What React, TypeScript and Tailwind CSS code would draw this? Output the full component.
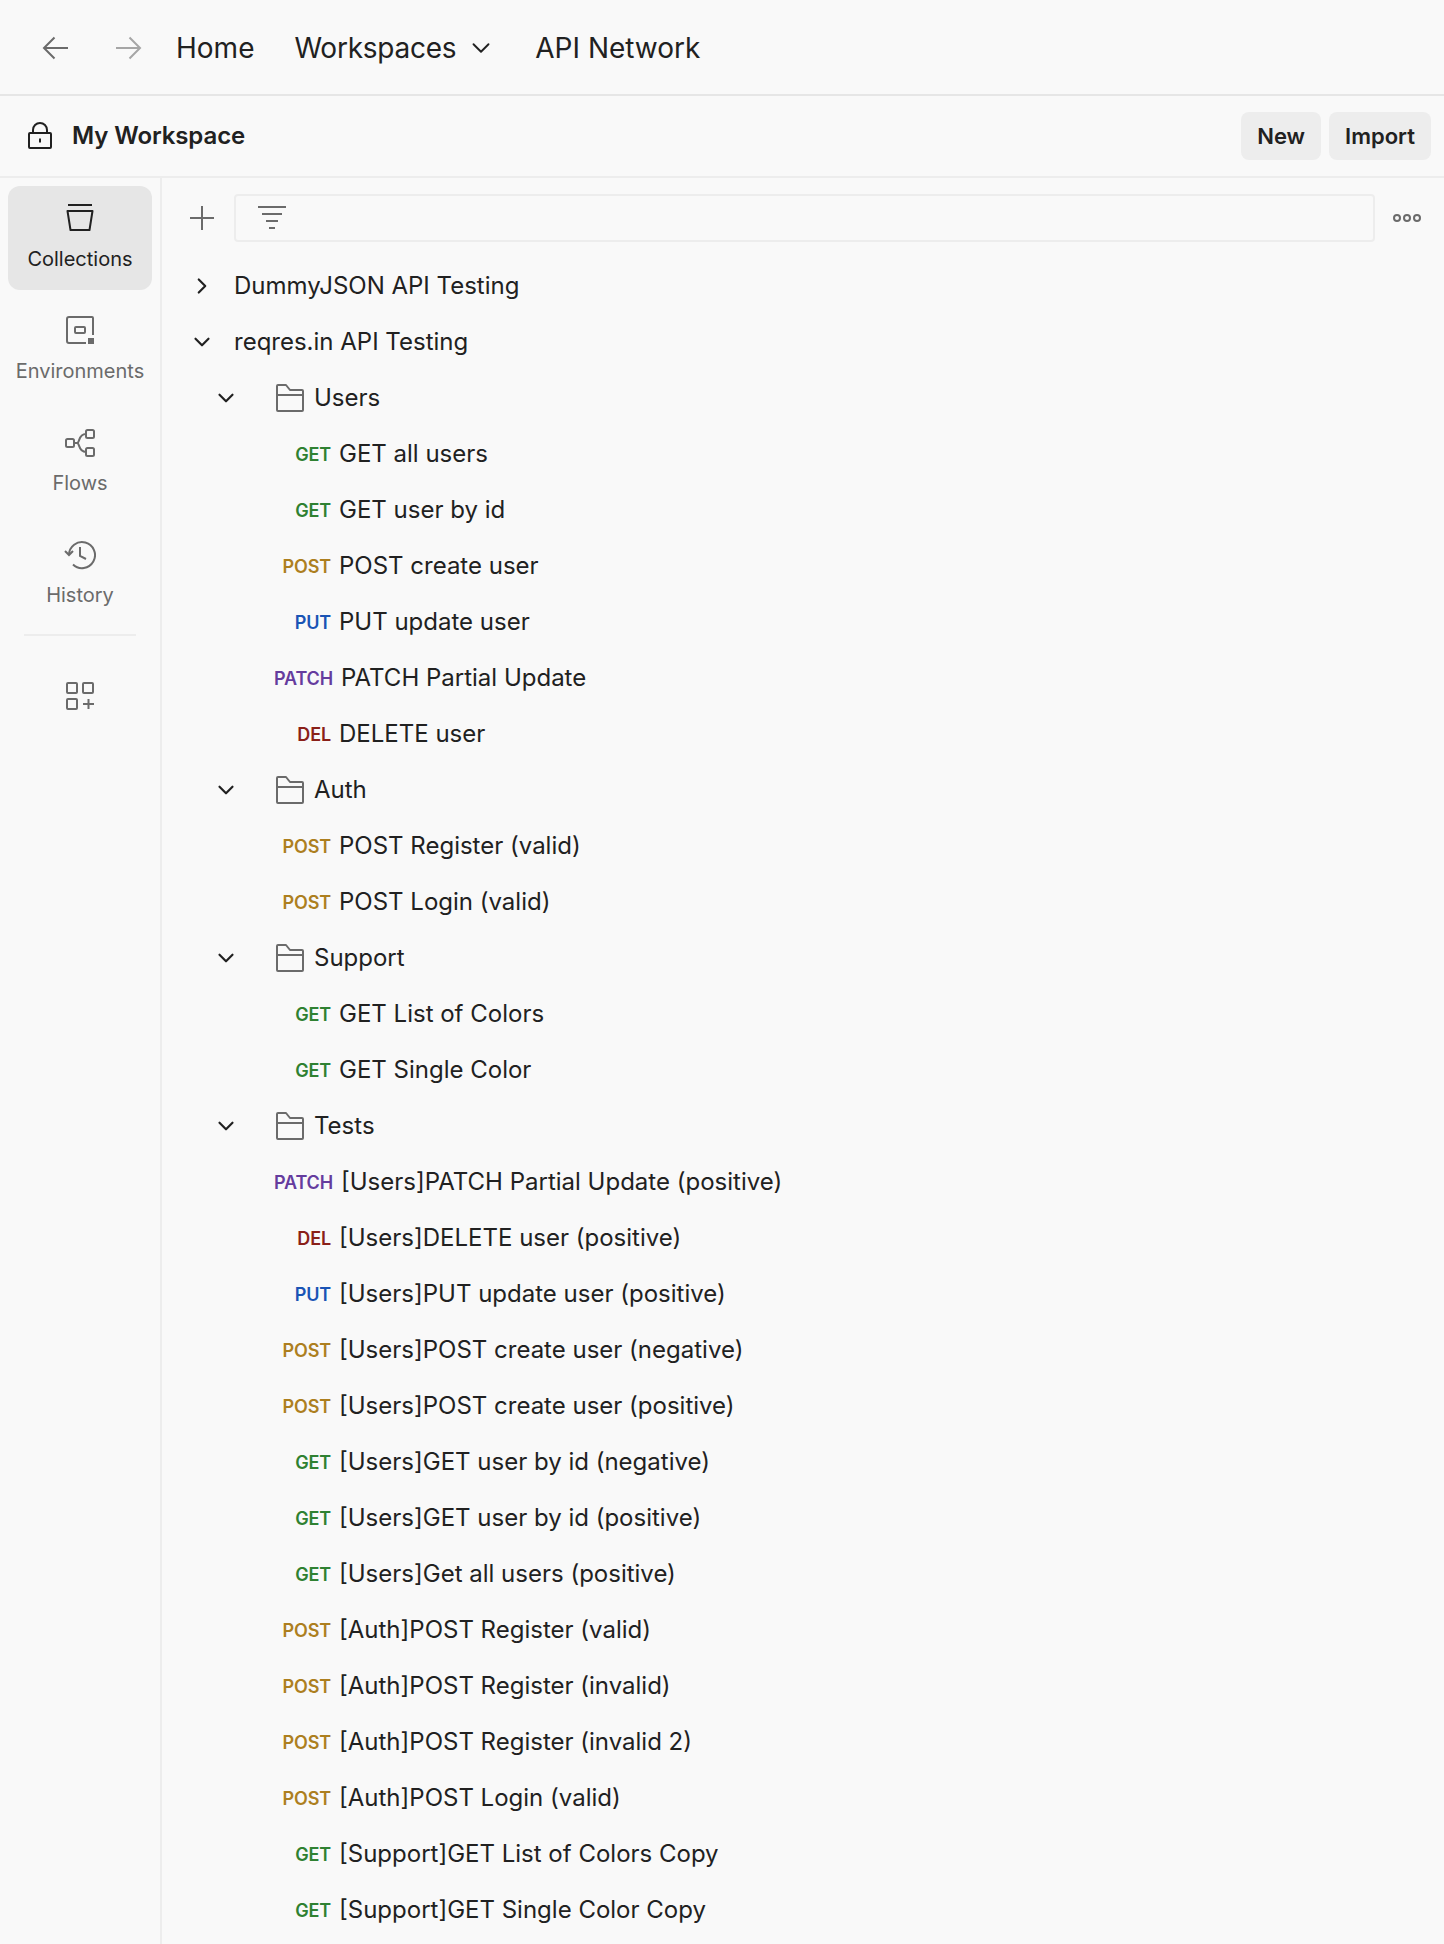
import React from 'react';
import { ChevronDown, ChevronRight } from 'lucide-react';

type Method = 'GET' | 'POST' | 'PUT' | 'PATCH' | 'DEL';

const METHOD_COLORS: Record<Method, string> = {
  GET: 'text-[#2f8132]',
  POST: 'text-[#ad7f1f]',
  PUT: 'text-[#1a54b5]',
  PATCH: 'text-[#653c9e]',
  DEL: 'text-[#8a2018]',
};

type Row =
  | { kind: 'collection'; name: string; open: boolean }
  | { kind: 'folder'; name: string }
  | { kind: 'request'; method: Method; name: string };

const ROWS: Row[] = [
  { kind: 'collection', name: 'DummyJSON API Testing', open: false },
  { kind: 'collection', name: 'reqres.in API Testing', open: true },
  { kind: 'folder', name: 'Users' },
  { kind: 'request', method: 'GET', name: 'GET all users' },
  { kind: 'request', method: 'GET', name: 'GET user by id' },
  { kind: 'request', method: 'POST', name: 'POST create user' },
  { kind: 'request', method: 'PUT', name: 'PUT update user' },
  { kind: 'request', method: 'PATCH', name: 'PATCH Partial Update' },
  { kind: 'request', method: 'DEL', name: 'DELETE user' },
  { kind: 'folder', name: 'Auth' },
  { kind: 'request', method: 'POST', name: 'POST Register (valid)' },
  { kind: 'request', method: 'POST', name: 'POST Login (valid)' },
  { kind: 'folder', name: 'Support' },
  { kind: 'request', method: 'GET', name: 'GET List of Colors' },
  { kind: 'request', method: 'GET', name: 'GET Single Color' },
  { kind: 'folder', name: 'Tests' },
  { kind: 'request', method: 'PATCH', name: '[Users]PATCH Partial Update (positive)' },
  { kind: 'request', method: 'DEL', name: '[Users]DELETE user (positive)' },
  { kind: 'request', method: 'PUT', name: '[Users]PUT update user (positive)' },
  { kind: 'request', method: 'POST', name: '[Users]POST create user (negative)' },
  { kind: 'request', method: 'POST', name: '[Users]POST create user (positive)' },
  { kind: 'request', method: 'GET', name: '[Users]GET user by id (negative)' },
  { kind: 'request', method: 'GET', name: '[Users]GET user by id (positive)' },
  { kind: 'request', method: 'GET', name: '[Users]Get all users (positive)' },
  { kind: 'request', method: 'POST', name: '[Auth]POST Register (valid)' },
  { kind: 'request', method: 'POST', name: '[Auth]POST Register (invalid)' },
  { kind: 'request', method: 'POST', name: '[Auth]POST Register (invalid 2)' },
  { kind: 'request', method: 'POST', name: '[Auth]POST Login (valid)' },
  { kind: 'request', method: 'GET', name: '[Support]GET List of Colors Copy' },
  { kind: 'request', method: 'GET', name: '[Support]GET Single Color Copy' },
];

const BackIcon = ({ color }: { color: string }) => (
  <svg width="32" height="32" viewBox="0 0 32 32" fill="none" stroke={color} strokeWidth="2">
    <path d="M5 16h23M14.500 5.500L4 16l10.500 10.500" />
  </svg>
);

const ForwardIcon = ({ color }: { color: string }) => (
  <svg width="32" height="32" viewBox="0 0 32 32" fill="none" stroke={color} strokeWidth="2">
    <path d="M4 16h23M17.500 5.500L28 16 17.500 26.500" />
  </svg>
);

const PlusIcon = () => (
  <svg width="40" height="40" viewBox="0 0 40 40" fill="none" stroke="#6b6b6b" strokeWidth="2">
    <path d="M8 20h24M20 8v24" />
  </svg>
);

const LockIcon = () => (
  <svg width="28" height="28" viewBox="0 0 28 28" fill="none" stroke="#212121" strokeWidth="2">
    <rect x="3" y="11" width="22" height="15" rx="1" />
    <path d="M7 11V8a7 7 0 0 1 14 0v3" />
    <path d="M14 16.500v4" />
  </svg>
);

const CollectionsIcon = () => (
  <svg width="32" height="32" viewBox="0 0 32 32" fill="none" stroke="#212121" strokeWidth="2">
    <path d="M4 2h24" />
    <path d="M3.500 8h25l-3 19h-19z" strokeLinejoin="round" />
  </svg>
);

const EnvironmentsIcon = () => (
  <svg width="32" height="32" viewBox="0 0 32 32" fill="none" stroke="#6b6b6b" strokeWidth="2">
    <path d="M29 20V3a1 1 0 0 0-1-1H5a2 2 0 0 0-2 2v22a2 2 0 0 0 2 2h17" />
    <rect x="11" y="12" width="10" height="6" rx="1" />
    <rect x="24" y="23" width="6" height="6" fill="#6b6b6b" stroke="none" />
  </svg>
);

const FlowsIcon = () => (
  <svg width="32" height="32" viewBox="0 0 32 32" fill="none" stroke="#6b6b6b" strokeWidth="2">
    <rect x="2" y="12" width="8" height="8" rx="1.500" />
    <rect x="22" y="3" width="8" height="8" rx="1.500" />
    <rect x="22" y="21" width="8" height="8" rx="1.500" />
    <path d="M10 16h3c3 0 1-9 9-9" />
    <path d="M13 16c3 0 1 9 9 9" />
  </svg>
);

const HistoryIcon = () => (
  <svg width="32" height="32" viewBox="0 0 32 32" fill="none" stroke="#6b6b6b" strokeWidth="2">
    <path d="M5 16a13 13 0 1 1 4 9.500" />
    <path d="M1 12l4 4 4-4" />
    <path d="M16 8v9l6 3" />
  </svg>
);

const AddonsIcon = () => (
  <svg width="32" height="32" viewBox="0 0 32 32" fill="none" stroke="#6b6b6b" strokeWidth="2">
    <rect x="3" y="3" width="10" height="10" rx="1" />
    <rect x="19" y="3" width="10" height="10" rx="1" />
    <rect x="3" y="19" width="10" height="10" rx="1" />
    <path d="M19 24h11M24.500 19v10" />
  </svg>
);

const FilterIcon = () => (
  <svg width="32" height="28" viewBox="0 0 32 28" fill="none" stroke="#6b6b6b" strokeWidth="2">
    <path d="M2 3h28M6 10h20M10 17h12M13 24h6" />
  </svg>
);

const FolderIcon = () => (
  <svg width="30" height="30" viewBox="0 0 30 30" fill="none" stroke="#6b6b6b" strokeWidth="2">
    <path d="M2 26V3a1 1 0 0 1 1-1h8l4 5h12a1 1 0 0 1 1 1v19a1 1 0 0 1-1 1H3a1 1 0 0 1-1-1z" strokeLinejoin="round" />
    <path d="M2 12h26" />
  </svg>
);

const DotsIcon = () => (
  <svg width="30" height="10" viewBox="0 0 30 10" fill="none" stroke="#6b6b6b" strokeWidth="2">
    <circle cx="5" cy="5" r="3" />
    <circle cx="15" cy="5" r="3" />
    <circle cx="25" cy="5" r="3" />
  </svg>
);

const SideItem = ({ icon, label, active }: { icon: React.ReactNode; label: string; active?: boolean }) => (
  <div className={`flex h-[104px] flex-col items-center justify-center gap-[12px] rounded-[12px] pb-[2px] ${active ? 'bg-[#e6e6e6] text-[#212121]' : 'text-[#6b6b6b]'}`}>
    {icon}
    <span className="text-[20px] leading-[24px]">{label}</span>
  </div>
);

const TreeRow = ({ row }: { row: Row }) => {
  if (row.kind === 'collection') {
    return (
      <div className="flex h-[56px] items-center pl-[27px]">
        {row.open ? <ChevronDown size={26} strokeWidth={2} className="text-[#212121]" /> : <ChevronRight size={26} strokeWidth={2} className="text-[#212121]" />}
        <span className="ml-[19px]">{row.name}</span>
      </div>
    );
  }
  if (row.kind === 'folder') {
    return (
      <div className="flex h-[56px] items-center pl-[51px]">
        <ChevronDown size={26} strokeWidth={2} className="text-[#212121]" />
        <span className="ml-[36px] flex"><FolderIcon /></span>
        <span className="ml-[9px]">{row.name}</span>
      </div>
    );
  }
  const isPatch = row.method === 'PATCH';
  return (
    <div className="flex h-[56px] items-center">
      <span className={`text-right text-[18px] font-semibold tracking-[-0.15px] ${isPatch ? 'w-[171px]' : 'w-[169px]'} ${METHOD_COLORS[row.method]}`}>
        {row.method}
      </span>
      <span className="ml-[8px]">{row.name}</span>
    </div>
  );
};

export default function App() {
  return (
    <div className="flex h-[1944px] flex-col overflow-hidden bg-[#f9f9f9] font-['Inter',sans-serif] text-[#212121]">
      <header className="flex h-[96px] items-center border-b-2 border-[#e6e6e6] pl-[40px] pt-[2px] text-[28px]">
        <BackIcon color="#6b6b6b" />
        <span className="ml-[40px] flex"><ForwardIcon color="#a6a6a6" /></span>
        <span className="ml-[32px]">Home</span>
        <span className="ml-[40px] tracking-[-0.25px]">Workspaces</span>
        <ChevronDown size={30} strokeWidth={1.5} className="ml-[10px]" />
        <span className="ml-[39px]">API Network</span>
      </header>

      <div className="flex h-[82px] items-center justify-between border-b-2 border-[#ededed] pl-[26px] pr-[13px]">
        <div className="flex items-center gap-[18px]">
          <LockIcon />
          <span className="text-[24px] font-semibold tracking-[-0.1px]">My Workspace</span>
        </div>
        <div className="flex items-center gap-[8px] text-[22px] font-semibold">
          <button className="h-[48px] rounded-[8px] bg-[#ededed] px-[16px]">New</button>
          <button className="h-[48px] rounded-[8px] bg-[#ededed] px-[16px]">Import</button>
        </div>
      </div>

      <div className="flex min-h-0 flex-1">
        <aside className="w-[162px] shrink-0 border-r-2 border-[#ededed] px-[8px] pt-[8px]">
          <div className="flex flex-col gap-[8px]">
            <SideItem icon={<CollectionsIcon />} label="Collections" active />
            <SideItem icon={<EnvironmentsIcon />} label="Environments" />
            <SideItem icon={<FlowsIcon />} label="Flows" />
            <SideItem icon={<HistoryIcon />} label="History" />
          </div>
          <div className="mx-[16px] mt-[8px] border-t-2 border-[#ededed]" />
          <div className="mt-[44px] flex justify-center"><AddonsIcon /></div>
        </aside>

        <main className="min-w-0 flex-1">
          <div className="flex items-center pl-[20px] pt-[16px]">
            <PlusIcon />
            <div className="ml-[12px] flex h-[48px] w-[1141px] items-center rounded-[4px] border-2 border-[#ededed] pl-[20px]">
              <FilterIcon />
            </div>
            <span className="ml-[17px] flex"><DotsIcon /></span>
          </div>
          <div className="mt-[16px] text-[24px]">
            {ROWS.map((row) => (
              <TreeRow key={row.name} row={row} />
            ))}
          </div>
        </main>
      </div>
    </div>
  );
}
